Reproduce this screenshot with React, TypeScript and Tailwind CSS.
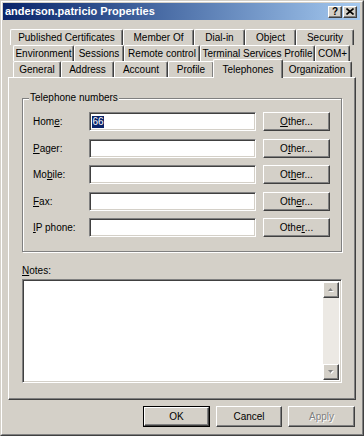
import React from 'react';

const FONT = "font-['Liberation_Sans',Arial,sans-serif]";

const raised =
    'border border-t-white border-l-white border-r-[#404040] border-b-[#404040] shadow-[inset_-1px_-1px_0_#808080] bg-[#d4d0c8]';
const sunken =
    'border border-t-[#808080] border-l-[#808080] border-r-white border-b-white shadow-[inset_1px_1px_0_#404040,inset_-1px_-1px_0_#d4d0c8]';

// mnemonic helper: underline one character
const Mn = ({ text, at }: { text: string; at: number }) => (
    <>
        {text.slice(0, at)}
        <span className="underline underline-offset-[1px]">{text[at]}</span>
        {text.slice(at + 1)}
    </>
);

type TabDef = { label: string; w: string; active?: boolean };

const rows: { ml: string; tabs: TabDef[] }[] = [
    {
        ml: 'ml-[8px]',
        tabs: [
            { label: 'Published Certificates', w: 'w-[113px]' },
            { label: 'Member Of', w: 'w-[71px]' },
            { label: 'Dial-in', w: 'w-[51px]' },
            { label: 'Object', w: 'w-[51px]' },
            { label: 'Security', w: 'w-[58px]' },
        ],
    },
    {
        ml: 'ml-[11px]',
        tabs: [
            { label: 'Environment', w: 'w-[61px]' },
            { label: 'Sessions', w: 'w-[50px]' },
            { label: 'Remote control', w: 'w-[76px]' },
            { label: 'Terminal Services Profile', w: 'w-[115px]' },
            { label: 'COM+', w: 'w-[35px]' },
        ],
    },
    {
        ml: 'ml-[11px]',
        tabs: [
            { label: 'General', w: 'w-[48px]' },
            { label: 'Address', w: 'w-[53px]' },
            { label: 'Account', w: 'w-[54px]' },
            { label: 'Profile', w: 'w-[46px]' },
            { label: 'Telephones', w: 'w-[70px]', active: true },
            { label: 'Organization', w: 'w-[70px]' },
        ],
    },
];

const phones = [
    { label: 'Home:', lu: 3, ou: 0, value: '66' },
    { label: 'Pager:', lu: 0, ou: 1 },
    { label: 'Mobile:', lu: 2, ou: 2 },
    { label: 'Fax:', lu: 0, ou: 3 },
    { label: 'IP phone:', lu: 0, ou: 4 },
];

const Arrow = ({ down }: { down?: boolean }) => (
    <div className={`${raised} w-[16px] h-[16px] flex items-center justify-center`}>
        <svg width="7" height="4" viewBox="0 0 7 4">
            {down ? (
                <>
                    <path d="M1 1h5l-2.5 3z" fill="#ffffff" />
                    <path d="M0 0h5l-2.5 3z" fill="#808080" />
                </>
            ) : (
                <>
                    <path d="M1 4h5l-2.5-3z" fill="#ffffff" />
                    <path d="M0 3h5l-2.5-3z" fill="#808080" />
                </>
            )}
        </svg>
    </div>
);

export default function App() {
    return (
        <div className={`${FONT} w-[364px] h-[436px] bg-[#d4d0c8] text-black text-[10px] border border-[#404040] border-t-[#d4d0c8] border-l-[#d4d0c8]`}>
            <div className="h-full border border-[#808080] border-t-white border-l-white">
                {/* title bar */}
                <div className="mt-[1px] ml-[1px] w-[357px] h-[17px] flex items-center bg-gradient-to-r from-[#0a246a] to-[#a6caf0]">
                    <span className="pl-[2px] text-white font-bold text-[11px] leading-none">anderson.patricio Properties</span>
                    <div className="ml-auto flex items-center gap-[1px] mr-[3px]">
                        <div className={`${raised} w-[14px] h-[12px] flex items-center justify-center text-[10px] font-bold leading-none`}>?</div>
                        <div className={`${raised} w-[14px] h-[12px] flex items-center justify-center`}>
                            <svg width="8" height="7" viewBox="0 0 8 7">
                                <path d="M0.5 0.5l7 6M7.5 0.5l-7 6" stroke="#000" strokeWidth="1.6" />
                            </svg>
                        </div>
                    </div>
                </div>

                {/* tabs */}
                <div className="mt-[9px]">
                    {rows.map((r, i) => (
                        <div key={i} className={`${r.ml} flex h-[16px]`}>
                            {r.tabs.map(t => (
                                <div
                                    key={t.label}
                                    className={
                                        t.active
                                            ? `${t.w} relative z-10 -mt-[2px] h-[19px] -mx-[1px] px-[1px] flex items-start pt-[2px] justify-center bg-[#d4d0c8] border-t border-l border-t-white border-l-white border-r border-r-[#404040] shadow-[inset_-1px_0_0_#808080] rounded-t-[2px] whitespace-nowrap`
                                            : `${t.w} h-[16px] flex items-center justify-center border-t border-l border-t-white border-l-white border-r border-r-[#404040] shadow-[inset_-1px_0_0_#808080] rounded-t-[2px] whitespace-nowrap`
                                    }
                                >
                                    {t.label}
                                </div>
                            ))}
                        </div>
                    ))}
                </div>

                {/* tab panel */}
                <div className={`ml-[6px] w-[348px] h-[323px] border border-t-white border-l-white border-r-[#404040] border-b-[#404040] shadow-[inset_-1px_-1px_0_#808080]`}>
                    <div className="ml-[13px] mt-[20px] relative w-[320px] h-[154px] border border-[#808080] shadow-[inset_1px_1px_0_#ffffff,1px_1px_0_#ffffff]">
                        <span className="absolute -top-[7px] left-[6px] px-[1px] bg-[#d4d0c8] leading-[12px]">Telephone numbers</span>
                        <div className="pt-[13px] pl-[10px] flex flex-col gap-[7.5px]">
                            {phones.map(p => (
                                <div key={p.label} className="flex items-center h-[19px]">
                                    <span className="w-[56px]">
                                        <Mn text={p.label} at={p.lu} />
                                    </span>
                                    <div className={`${sunken} bg-white w-[167px] h-[19px] flex items-center pl-[2px]`}>
                                        {p.value && <span className="bg-[#0a246a] text-white leading-[12px] px-[0.5px]">{p.value}</span>}
                                    </div>
                                    <div className={`${raised} ml-[7px] w-[67px] h-[19px] flex items-center justify-center`}>
                                        <Mn text="Other..." at={p.ou} />
                                    </div>
                                </div>
                            ))}
                        </div>
                    </div>

                    <div className="ml-[13px] mt-[12px] leading-[13px]">
                        <Mn text="Notes:" at={0} />
                    </div>
                    <div className={`${sunken} ml-[13px] mt-[2px] w-[320px] h-[104px] bg-white flex justify-end p-[2px]`}>
                        <div className="w-[16px] h-full bg-[#ece9e4] flex flex-col justify-between">
                            <Arrow />
                            <Arrow down />
                        </div>
                    </div>
                </div>

                {/* dialog buttons */}
                <div className="mt-[6px] ml-[141px] flex gap-[6px]">
                    <div className="w-[67px] h-[21px] border border-black">
                        <div className={`${raised} w-full h-full flex items-center justify-center`}>OK</div>
                    </div>
                    <div className={`${raised} w-[66px] h-[21px] flex items-center justify-center`}>Cancel</div>
                    <div className={`${raised} w-[67px] h-[21px] flex items-center justify-center text-[#808080] [text-shadow:1px_1px_0_#ffffff]`}>Apply</div>
                </div>
            </div>
        </div>
    );
}
